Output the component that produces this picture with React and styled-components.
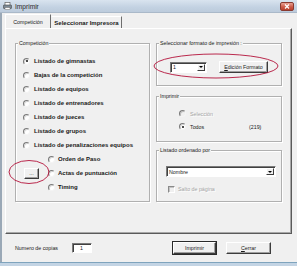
import React from "react";
import styled, { createGlobalStyle } from "styled-components";

const GlobalStyle = createGlobalStyle`
  html, body {
    margin: 0;
    padding: 0;
    background: #f0f0f0;
    overflow: hidden;
  }
  * { box-sizing: border-box; }
`;

const Window = styled.div`
  width: 297px;
  height: 266px;
  display: flex;
  flex-direction: column;
  background: #f0f0f0;
  font-family: "Liberation Sans", Arial, sans-serif;
  font-size: 5.3px;
  color: #1a1a1a;
  position: relative;
  overflow: hidden;
`;

const TitleBar = styled.div`
  height: 13px;
  flex: none;
  display: flex;
  align-items: center;
  padding: 0 3px 0 3px;
  background: linear-gradient(#d9e4ef, #c3d2e2 60%, #bccbdc);
  border-bottom: 1px solid #aab9c9;
`;

const TitleText = styled.span`
  margin-left: 3px;
  font-size: 6.6px;
  color: #2a2a2a;
`;

const CloseButton = styled.div`
  margin-left: auto;
  width: 14px;
  height: 9px;
  border-radius: 2px;
  border: 1px solid #8a3a30;
  background: linear-gradient(#e9a093, #cc5a48 55%, #b8402e);
  display: flex;
  align-items: center;
  justify-content: center;
`;

const Main = styled.div`
  flex: 1;
  display: flex;
  flex-direction: column;
  border-left: 2px solid #9aa8b6;
`;

const TabStrip = styled.div`
  height: 14px;
  margin-top: 1px;
  padding-left: 3px;
  display: flex;
  align-items: flex-end;
`;

const Tab = styled.div`
  width: ${p => p.$w}px;
  height: ${p => (p.$active ? 14 : 12)}px;
  display: flex;
  align-items: center;
  justify-content: center;
  padding-top: ${p => (p.$active ? 1 : 0)}px;
  border-top: 1px solid #fff;
  border-left: 1px solid ${p => (p.$active ? "#fff" : "#f0f0f0")};
  border-right: 1px solid #6e6e6e;
  font-weight: ${p => (p.$bold ? "bold" : "normal")};
  font-size: ${p => (p.$bold ? 6 : 5.3)}px;
  color: #1a1a1a;
  white-space: nowrap;
`;

const TabPanel = styled.div`
  margin-left: 3px;
  width: 287px;
  height: 206px;
  border-top: 1px solid #fff;
  border-left: 1px solid #fff;
  border-right: 1px solid #5a5a5a;
  border-bottom: 1px solid #5a5a5a;
  box-shadow: inset -1px -1px 0 #a8a8a8;
  padding: 14px 0 0 9px;
  display: flex;
  gap: 6px;
  align-items: flex-start;
`;

const GroupBox = styled.div`
  width: ${p => p.$w}px;
  height: ${p => p.$h}px;
  border: 1px solid #b0b0b0;
  box-shadow: inset 1px 1px 0 #fff, 1px 1px 0 #fff;
  padding-left: ${p => p.$pl || 0}px;
  display: flex;
  flex-direction: column;
  align-items: flex-start;
`;

const GroupTitle = styled.span`
  display: inline-block;
  height: 7px;
  line-height: 7px;
  margin-top: -4px;
  margin-left: ${p => 2 - (p.$pl || 0)}px;
  padding: 0 1px;
  background: #f0f0f0;
  white-space: nowrap;
`;

const RightColumn = styled.div`
  display: flex;
  flex-direction: column;
  gap: ${p => p.$gap || 0}px;
`;

const OptionList = styled.div`
  margin-top: 7px;
  display: flex;
  flex-direction: column;
`;

const OptionRow = styled.div`
  height: ${p => p.$h || 14}px;
  display: flex;
  align-items: center;
  gap: 4px;
  font-weight: ${p => (p.$bold ? "bold" : "normal")};
  font-size: ${p => (p.$bold ? 6 : 5.3)}px;
  color: ${p => (p.$disabled ? "#a4a4a4" : "#1a1a1a")};
  text-shadow: ${p => (p.$disabled ? "1px 1px 0 #fff" : "none")};
  white-space: nowrap;
`;

const SubRow = styled.div`
  height: 14px;
  display: grid;
  grid-template-columns: 22px 7px auto;
  align-items: center;
  column-gap: 3px;
  font-weight: bold;
  font-size: 6px;
  white-space: nowrap;
`;

const Radio = styled.span`
  width: 7px;
  height: 7px;
  flex: none;
  border-radius: 50%;
  border: 1px solid;
  border-color: #7a7a7a #f4f4f4 #f4f4f4 #7a7a7a;
  background: ${p => (p.$disabled ? "#f0f0f0" : "#fff")};
  box-shadow: inset 1px 1px 0 ${p => (p.$disabled ? "#c0c0c0" : "#d8d8d8")};
  position: relative;
  &::after {
    content: "";
    display: ${p => (p.$checked ? "block" : "none")};
    position: absolute;
    left: 1.5px;
    top: 1.5px;
    width: 2px;
    height: 2px;
    border-radius: 50%;
    background: #111;
  }
`;

const Check = styled.span`
  width: 7px;
  height: 7px;
  flex: none;
  border: 1px solid;
  border-color: #8a8a8a #fff #fff #8a8a8a;
  background: #f0f0f0;
  box-shadow: inset 1px 1px 0 #c4c4c4;
`;

const RaisedButton = styled.div`
  width: ${p => p.$w}px;
  height: ${p => p.$h || 12}px;
  margin-left: ${p => p.$ml || 0}px;
  display: flex;
  align-items: center;
  justify-content: center;
  background: #f0f0f0;
  border: 1px solid;
  border-color: #fff #3c3c3c #3c3c3c #fff;
  box-shadow: ${p => (p.$default ? "0 0 0 1px #2a2a2a, inset -1px -1px 0 #a0a0a0" : "inset -1px -1px 0 #a0a0a0")};
  font-size: 5.3px;
  font-weight: normal;
  color: #1a1a1a;
  white-space: nowrap;
  flex: none;
`;

const Combo = styled.div`
  width: ${p => p.$w}px;
  height: 11px;
  flex: none;
  display: flex;
  align-items: stretch;
  background: #fff;
  border: 1px solid;
  border-color: #7a7a7a #fff #fff #7a7a7a;
  box-shadow: inset 1px 1px 0 #404040;
  padding: 1px 1px 1px 2px;
  font-size: 5.3px;
`;

const ComboText = styled.span`
  flex: 1;
  display: flex;
  align-items: center;
`;

const ComboArrow = styled.span`
  width: 8px;
  flex: none;
  background: #f0f0f0;
  border: 1px solid;
  border-color: #fff #3c3c3c #3c3c3c #fff;
  display: flex;
  align-items: center;
  justify-content: center;
  &::after {
    content: "";
    border-left: 2px solid transparent;
    border-right: 2px solid transparent;
    border-top: 2px solid #000;
  }
`;

const ControlRow = styled.div`
  margin-top: ${p => p.$mt || 0}px;
  margin-left: ${p => p.$ml || 0}px;
  display: flex;
  align-items: center;
`;

const CountGrid = styled.div`
  margin-top: 7px;
  display: flex;
  flex-direction: column;
`;

const CountValue = styled.span`
  margin-left: auto;
  width: 20px;
`;

const Footer = styled.div`
  height: 28px;
  display: flex;
  align-items: center;
  padding-left: 13px;
  font-size: 5.3px;
`;

const FooterLabel = styled.span`
  width: 57px;
  white-space: nowrap;
`;

const CopiesInput = styled.div`
  width: 20px;
  height: 10px;
  background: #fff;
  border: 1px solid;
  border-color: #7a7a7a #fff #fff #7a7a7a;
  box-shadow: inset 1px 1px 0 #404040;
  padding-left: 7px;
  display: flex;
  align-items: center;
`;

const BottomFrame = styled.div`
  height: 4px;
  flex: none;
  border-top: 1px solid #7fa4bd;
  background: #c3d4e4;
`;

const Annotation = styled.svg`
  position: absolute;
  left: 0;
  top: 0;
  pointer-events: none;
`;

const Underline = styled.span`
  text-decoration: underline;
`;

function PrinterIcon() {
  return (
    <svg width="9" height="8" viewBox="0 0 9 8">
      <rect x="2" y="0.5" width="5" height="3" fill="#fff" stroke="#666" strokeWidth="0.7" />
      <rect x="0.5" y="3" width="8" height="3.5" rx="0.6" fill="#7d8a96" stroke="#444" strokeWidth="0.6" />
      <rect x="2" y="5.5" width="5" height="2.2" fill="#fff" stroke="#666" strokeWidth="0.5" />
    </svg>
  );
}

function CloseGlyph() {
  return (
    <svg width="6" height="5" viewBox="0 0 6 5">
      <path d="M1 0.5 L5 4.5 M5 0.5 L1 4.5" stroke="#fff" strokeWidth="1.2" />
    </svg>
  );
}

const mainOptions = [
  "Listado de gimnastas",
  "Bajas de la competición",
  "Listado de equipos",
  "Listado de entrenadores",
  "Listado de jueces",
  "Listado de grupos",
  "Listado de penalizaciones equipos",
];

export default function App() {
  return (
    <>
      <GlobalStyle />
      <Window>
        <TitleBar>
          <PrinterIcon />
          <TitleText>Imprimir</TitleText>
          <CloseButton>
            <CloseGlyph />
          </CloseButton>
        </TitleBar>

        <Main>
          <TabStrip>
            <Tab $w={46} $active>Competición</Tab>
            <Tab $w={71} $bold>Seleccionar Impresora</Tab>
          </TabStrip>

          <TabPanel>
            <GroupBox $w={135} $h={159} $pl={7}>
              <GroupTitle $pl={7}>Competición</GroupTitle>
              <OptionList>
                {mainOptions.map((label, i) => (
                  <OptionRow key={label} $bold>
                    <Radio $checked={i === 0} />
                    {label}
                  </OptionRow>
                ))}
                <SubRow>
                  <span />
                  <Radio />
                  Orden de Paso
                </SubRow>
                <SubRow>
                  <RaisedButton $w={15} $h={11} $ml={1}>...</RaisedButton>
                  <Radio />
                  Actas de puntuación
                </SubRow>
                <SubRow>
                  <span />
                  <Radio />
                  Timing
                </SubRow>
              </OptionList>
            </GroupBox>

            <RightColumn>
              <GroupBox $w={126} $h={43} $pl={13}>
                <GroupTitle $pl={13}>Seleccionar formato de impresión :</GroupTitle>
                <ControlRow $mt={14}>
                  <Combo $w={37}>
                    <ComboText>1</ComboText>
                    <ComboArrow />
                  </Combo>
                  <RaisedButton $w={49} $ml={12}>
                    <Underline>E</Underline>dición Formato
                  </RaisedButton>
                </ControlRow>
              </GroupBox>

              <RightColumn $gap={0} style={{ marginTop: 10 }}>
                <GroupBox $w={126} $h={46} $pl={22}>
                  <GroupTitle $pl={22}>Imprimir</GroupTitle>
                  <CountGrid>
                    <OptionRow $h={13} $disabled>
                      <Radio $disabled />
                      Selección
                    </OptionRow>
                    <OptionRow $h={13} style={{ width: 90 }}>
                      <Radio $checked />
                      Todos
                      <CountValue>(219)</CountValue>
                    </OptionRow>
                  </CountGrid>
                </GroupBox>
              </RightColumn>

              <GroupBox $w={126} $h={52} $pl={9} style={{ marginTop: 8 }}>
                <GroupTitle $pl={9}>Listado ordenado por</GroupTitle>
                <ControlRow $mt={12}>
                  <Combo $w={110}>
                    <ComboText>Nombre</ComboText>
                    <ComboArrow />
                  </Combo>
                </ControlRow>
                <ControlRow $mt={6} $ml={2}>
                  <OptionRow $h={12} $disabled style={{ gap: 3 }}>
                    <Check />
                    Salto de página
                  </OptionRow>
                </ControlRow>
              </GroupBox>
            </RightColumn>
          </TabPanel>

          <Footer>
            <FooterLabel>Numero de copias</FooterLabel>
            <CopiesInput>1</CopiesInput>
            <RaisedButton $w={43} $ml={81} $default>Imprimir</RaisedButton>
            <RaisedButton $w={45} $ml={10}>
              <Underline>C</Underline>errar
            </RaisedButton>
          </Footer>
        </Main>

        <BottomFrame />

        <Annotation width="297" height="266" viewBox="0 0 297 266">
          <ellipse cx="216" cy="66" rx="62" ry="12" fill="none" stroke="#b3123a" strokeWidth="0.9" />
          <ellipse cx="29" cy="172" rx="20" ry="11.5" fill="none" stroke="#b3123a" strokeWidth="0.9" />
        </Annotation>
      </Window>
    </>
  );
}
